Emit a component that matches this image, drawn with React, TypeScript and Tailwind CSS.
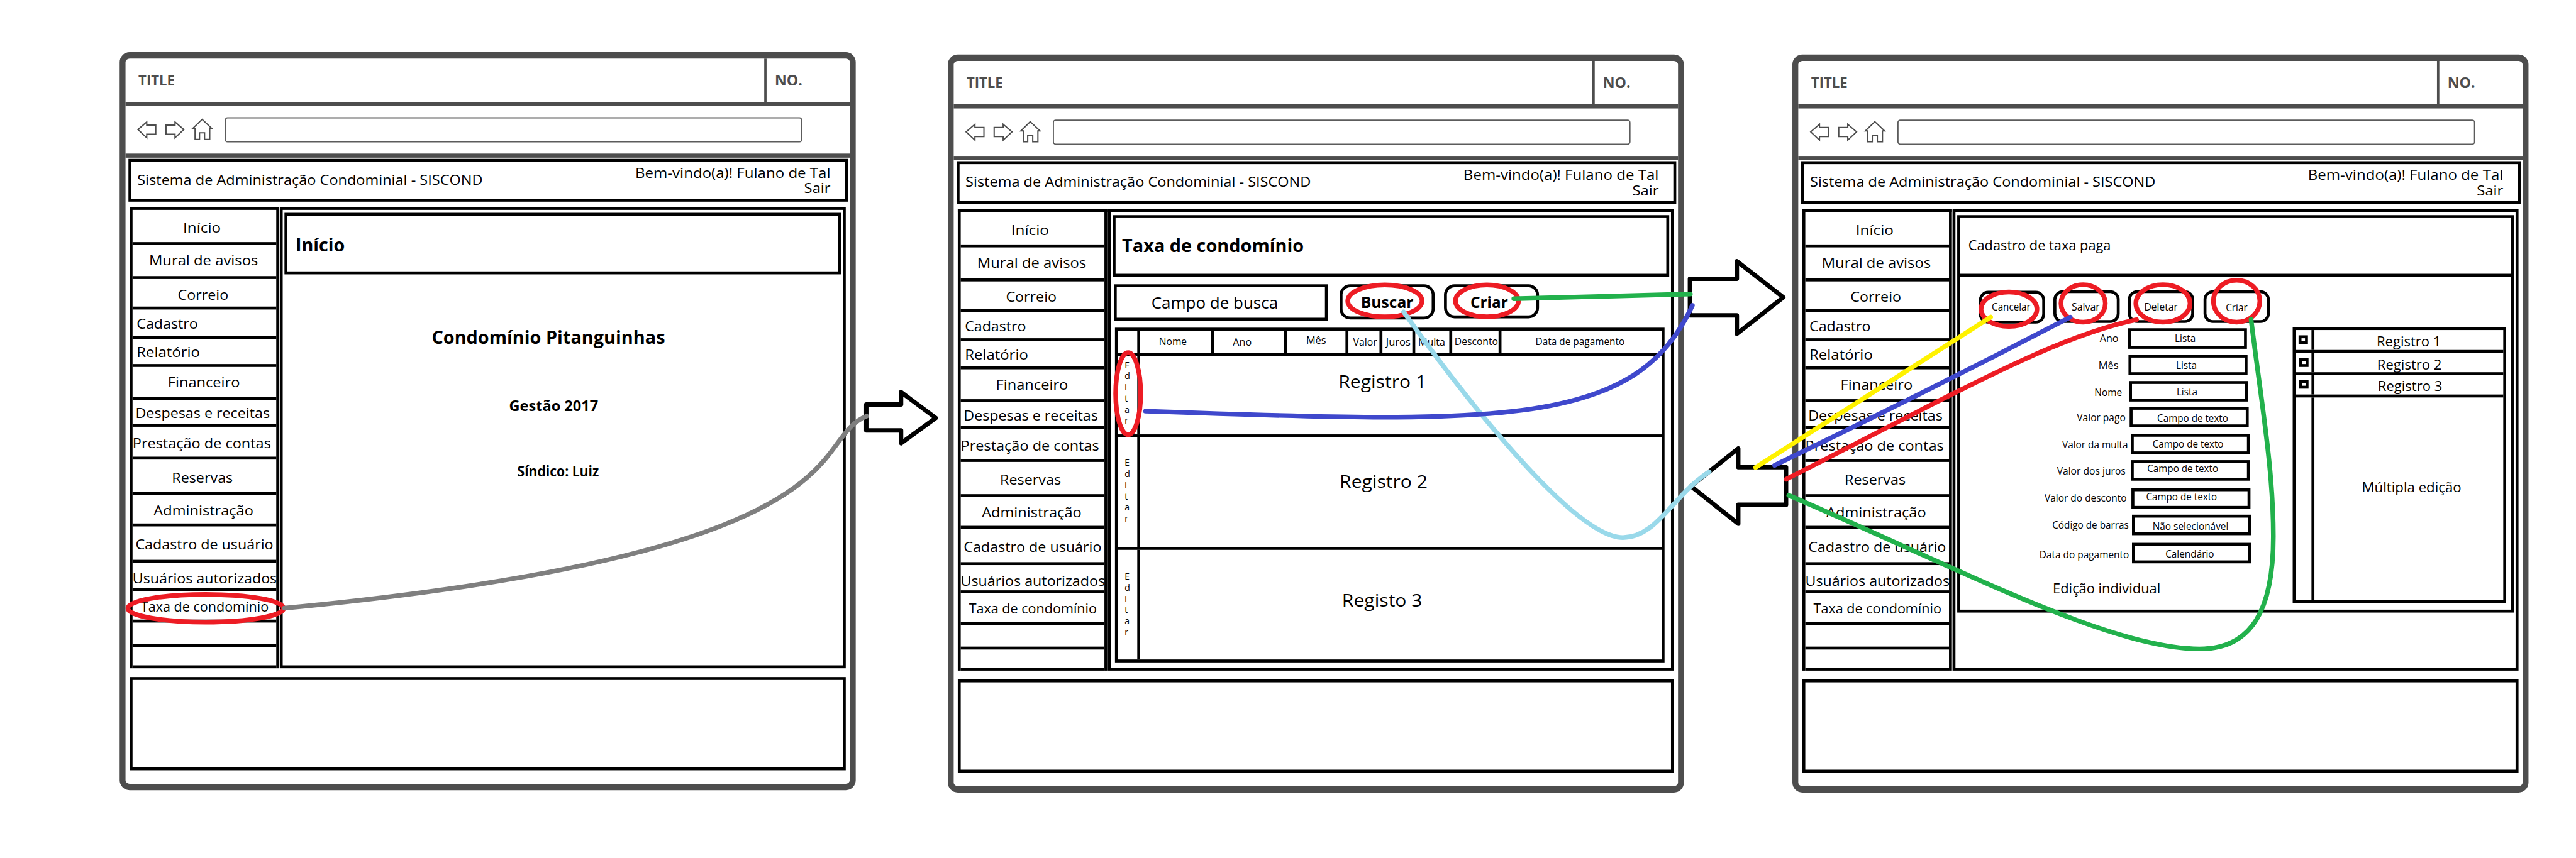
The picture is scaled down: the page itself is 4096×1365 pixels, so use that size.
import { useLayoutEffect, useRef } from "react";
import type { ReactNode } from "react";

/** Single line of text, condensed or widened horizontally to the given width. */
function Fit({ width, className = "", children }: { width: number; className?: string; children: ReactNode }) {
  const outer = useRef<HTMLSpanElement>(null);
  const inner = useRef<HTMLSpanElement>(null);
  useLayoutEffect(() => {
    if (!outer.current || !inner.current) return;
    inner.current.style.transform = "none";
    const ratio = outer.current.getBoundingClientRect().width / inner.current.getBoundingClientRect().width;
    inner.current.style.transform = `scaleX(${ratio})`;
  }, [width, children]);
  return (
    <span ref={outer} className={`block shrink-0 leading-none ${className}`} style={{ width }}>
      <span ref={inner} className="inline-block origin-left whitespace-nowrap">
        {children}
      </span>
    </span>
  );
}

type Item = { text: string; width: number; row: string };

const menu: Item[] = [
  { text: "Início", width: 64.5, row: "h-[60px] pl-[86px] pt-[18px]" },
  { text: "Mural de avisos", width: 186, row: "h-[58px] pl-[28px] pt-[14px]" },
  { text: "Correio", width: 86.5, row: "h-[52px] pl-[76.5px] pt-[14px]" },
  { text: "Cadastro", width: 104.5, row: "h-[50px] pl-[6.5px] pt-[11.5px]" },
  { text: "Relatório", width: 108, row: "h-[48px] pl-[7px] pt-[10px]" },
  { text: "Financeiro", width: 123, row: "h-[56px] pl-[60px] pt-[14px]" },
  { text: "Despesas e receitas", width: 229, row: "h-[46px] pl-[5px] pt-[10px]" },
  { text: "Prestação de contas", width: 236, row: "h-[56px] pl-0 pt-[15.5px]" },
  { text: "Reservas", width: 104, row: "h-[60px] pl-[67px] pt-[18px]" },
  { text: "Administração", width: 170, row: "h-[54px] pl-[35.5px] pt-[14px]" },
  { text: "Cadastro de usuário", width: 235, row: "h-[62px] pl-[4.5px] pt-[17.5px]" },
  { text: "Usuários autorizados", width: 246, row: "h-[48px] pl-0 pt-[13.5px]" },
  { text: "Taxa de condomínio", width: 218, row: "h-[54px] pl-[14px] pt-[14px]" },
  { text: "", width: 0, row: "h-[42px]" },
  { text: "", width: 0, row: "h-[36px]" },
];

function Toolbar() {
  return (
    <div className="flex h-[81px] pl-[18px] pt-[19px]">
      <svg width="136" height="42" viewBox="232 200 136 42" fill="none" stroke="#4d4d4d" strokeWidth="2.2">
        <path d="M235.2 221 L250.2 208 V213.4 H265.6 V229 H250.2 V235 Z" />
        <path d="M313.4 221 L298.4 208 V213.4 H283 V229 H298.4 V235 Z" />
        <path d="M344.6 203.6 L328.5 219.3 H332.6 V237.8 H340.2 V226.6 H348.8 V237.8 H357.6 V219.3 H361.2 Z" />
      </svg>
      <div className="ml-[15px] h-[43px] w-[985px] rounded-[5px] border-2 border-[#5c5c5c]" />
    </div>
  );
}

function Screen({ className, children }: { className: string; children: ReactNode }) {
  return (
    <section
      className={`flex h-[1259px] w-[1255px] shrink-0 flex-col rounded-[17px] border-x-[10px] border-y-[11px] border-[#4d4d4d] ${className}`}
    >
      <div className="flex h-[81px] shrink-0 border-b-[7px] border-[#4d4d4d] text-[25px] font-bold text-[#4d4d4d]">
        <div className="flex-1 pl-[21.5px] pt-[24px]">
          <Fit width={62}>TITLE</Fit>
        </div>
        <div className="w-[146px] border-l-4 border-[#4d4d4d] pl-[14px] pt-[24px]">
          <Fit width={47}>NO.</Fit>
        </div>
      </div>
      <div className="shrink-0 border-b-[7px] border-[#4d4d4d]">
        <Toolbar />
      </div>
      <header className="ml-[5px] mt-[2px] flex h-[73px] w-[1227px] shrink-0 justify-between border-5 border-black text-[24px]">
        <div className="pl-[10px] pt-[17.5px]">
          <Fit width={589}>Sistema de Administração Condominial - SISCOND</Fit>
        </div>
        <div className="flex flex-col items-end gap-[2.3px] pr-[25px] pt-[5.5px]">
          <Fit width={333}>Bem-vindo(a)! Fulano de Tal</Fit>
          <Fit width={45}>Sair</Fit>
        </div>
      </header>
      <div className="ml-[7px] mt-[9px] flex h-[787px] shrink-0 gap-px">
        <nav className="w-[255px] shrink-0 border-x-5 border-t-5 border-black text-[24px]">
          {menu.map((m, i) => (
            <div key={i} className={`border-b-5 border-black ${m.row}`}>
              {m.text && <Fit width={m.width}>{m.text}</Fit>}
            </div>
          ))}
        </nav>
        <main className="w-[965px] shrink-0 border-5 border-black">{children}</main>
      </div>
      <footer className="ml-[7px] mt-[15px] h-[159px] w-[1221px] shrink-0 border-5 border-black" />
    </section>
  );
}

function HomeScreen() {
  return (
    <>
      <div className="ml-[3px] mt-[5px] h-[105px] w-[949px] border-5 border-black pl-[14px] pt-[33.5px] text-[31px] font-bold">
        <Fit width={84}>Início</Fit>
      </div>
      <div className="flex flex-col font-bold">
        <Fit width={398} className="ml-[254px] mt-[93px] text-[30px]">Condomínio Pitanguinhas</Fit>
        <Fit width={152} className="ml-[386px] mt-[88.5px] text-[24px]">Gestão 2017</Fit>
        <Fit width={139} className="ml-[400px] mt-[88px] text-[24px]">Síndico: Luiz</Fit>
      </div>
    </>
  );
}

const columns: Item[] = [
  { text: "Nome", width: 47.5, row: "w-[126px] pl-[32px] pt-[10px] border-r-5" },
  { text: "Ano", width: 32, row: "w-[124px] pl-[32px] pt-[11px] border-r-5" },
  { text: "Mês", width: 34, row: "w-[105px] pl-[33px] pt-[8px] border-r-5" },
  { text: "Valor", width: 41, row: "w-[58px] pl-[8px] pt-[11px] border-r-5" },
  { text: "Juros", width: 42, row: "w-[56px] pl-[6px] pt-[11px] border-r-5" },
  { text: "Multa", width: 46, row: "w-[63px] pl-[4.5px] pt-[11px] border-r-5" },
  { text: "Desconto", width: 74, row: "w-[84px] pl-[3.5px] pt-[10px] border-r-5" },
  { text: "Data de pagamento", width: 152, row: "w-[273px] pl-[58px] pt-[10px]" },
];

const records = [
  { text: "Registro 1", width: 150, row: "h-[139px] border-b-5", edit: "pt-[6.4px]", label: "pl-[337.5px] pt-[29px]" },
  { text: "Registro 2", width: 150, row: "h-[192px] border-b-5", edit: "pt-[34px]", label: "pl-[339.5px] pt-[60px]" },
  { text: "Registo 3", width: 137, row: "h-[187px]", edit: "pt-[36px]", label: "pl-[343.5px] pt-[71px]" },
];

function FeeScreen() {
  return (
    <>
      <div className="ml-[3px] mt-[5px] h-[105px] w-[949px] border-5 border-black pl-[11px] pt-[31.5px] text-[30px] font-bold">
        <Fit width={310}>Taxa de condomínio</Fit>
      </div>
      <div className="ml-[5px] mt-[13px] flex h-[62px] items-start">
        <div className="h-[62px] w-[365px] border-5 border-black pl-[58.5px] pt-[13px] text-[27px]">
          <Fit width={216}>Campo de busca</Fit>
        </div>
        <div className="ml-[20px] h-[60px] w-[162px] rounded-[18px] border-5 border-black pl-[31px] pt-[11px] text-[27px] font-bold">
          <Fit width={90}>Buscar</Fit>
        </div>
        <div className="ml-[15.5px] h-[58px] w-[162px] rounded-[18px] border-5 border-black pl-[40px] pt-[11px] text-[27px] font-bold">
          <Fit width={64}>Criar</Fit>
        </div>
      </div>
      <div className="ml-[7px] mt-[12px] h-[571px] w-[937px] border-5 border-black">
        <div className="flex h-[43px] border-b-5 border-black text-[17.5px]">
          <div className="w-[38px] border-r-5 border-black" />
          {columns.map((c) => (
            <div key={c.text} className={`border-black ${c.row}`}>
              <Fit width={c.width}>{c.text}</Fit>
            </div>
          ))}
        </div>
        {records.map((r) => (
          <div key={r.text} className={`flex border-black ${r.row}`}>
            <div className={`flex w-[38px] flex-col border-r-5 border-black pl-[11.5px] text-[15px] leading-[19px] ${r.edit}`}>
              {"Editar".split("").map((ch, i) => (
                <span key={i}>{ch}</span>
              ))}
            </div>
            <div className={`text-[30px] ${r.label}`}>
              <Fit width={r.width}>{r.text}</Fit>
            </div>
          </div>
        ))}
      </div>
    </>
  );
}

const actions: Item[] = [
  { text: "Cancelar", width: 66, row: "ml-[32px] mt-[24px] pl-[17px] pt-[14px]" },
  { text: "Salvar", width: 48, row: "ml-[13.5px] mt-[23px] pl-[26px] pt-[15px]" },
  { text: "Deletar", width: 57, row: "ml-[14px] mt-[23px] pl-[23.5px] pt-[15px]" },
  { text: "Criar", width: 37, row: "ml-[16px] mt-[23px] pl-[33.5px] pt-[16px]" },
];

const fields = [
  { label: "Ano", lw: 32, row: "", cell: "w-[286px] pr-[16px] pt-[8px]", value: "Lista", vw: 35.5, box: "pl-[75px] pt-[3px]" },
  { label: "Mês", lw: 34, row: "mt-[10px]", cell: "w-[287px] pr-[17.5px] pt-[9px]", value: "Lista", vw: 35.5, box: "pl-[76px] pt-[4px]" },
  { label: "Nome", lw: 47, row: "mt-[10px]", cell: "w-[288px] pr-[12.5px] pt-[10px]", value: "Lista", vw: 35.5, box: "pl-[76px] pt-[4px]" },
  { label: "Valor pago", lw: 83, row: "mt-[9px]", cell: "w-[289px] pr-[7.5px] pt-[9px]", value: "Campo de texto", vw: 121, box: "pl-[42px] pt-[5px]" },
  { label: "Valor da multa", lw: 112, row: "mt-[11px]", cell: "w-[291px] pr-[5px] pt-[9px]", value: "Campo de texto", vw: 121, box: "pl-[31.5px] pt-[3px]" },
  { label: "Valor dos juros", lw: 117, row: "mt-[10px]", cell: "w-[291px] pr-[9px] pt-[10px]", value: "Campo de texto", vw: 121, box: "pl-[23px] pt-0" },
  { label: "Valor do desconto", lw: 140, row: "mt-[13px]", cell: "w-[292px] pr-[8.5px] pt-[8px]", value: "Campo de texto", vw: 121, box: "pl-[20px] pt-[1px]" },
  { label: "Código de barras", lw: 130.5, row: "mt-[10px]", cell: "w-[293px] pr-[6px] pt-[9px]", value: "Não selecionável", vw: 129.5, box: "pl-[30px] pt-[6px]" },
  { label: "Data do pagamento", lw: 153, row: "mt-[13px]", cell: "w-[293px] pr-[5.5px] pt-[11px]", value: "Calendário", vw: 83, box: "pl-[52px] pt-[5px]" },
];

const picks = [
  { text: "Registro 1", row: "h-[39px]", box: "pl-[5px] pt-[9px]", label: "pl-[105.5px] pt-[7px]" },
  { text: "Registro 2", row: "h-[38px]", box: "pl-[6px] pt-[9px]", label: "pl-[106.5px] pt-[7px]" },
  { text: "Registro 3", row: "h-[38px]", box: "pl-[6px] pt-[8px]", label: "pl-[107.5px] pt-[6px]" },
];

function EditScreen() {
  return (
    <div className="ml-[3px] mt-[5px] h-[678px] w-[949px] border-5 border-black">
      <div className="h-[100px] border-b-5 border-black pl-[14px] pt-[33.5px] text-[24px]">
        <Fit width={243}>Cadastro de taxa paga</Fit>
      </div>
      <div className="flex">
        <div className="w-[567px] shrink-0 text-[17.5px]">
          <div className="flex h-[88px] items-start">
            {actions.map((a) => (
              <div key={a.text} className={`h-[55.5px] w-[113px] shrink-0 rounded-[16px] border-5 border-black ${a.row}`}>
                <Fit width={a.width}>{a.text}</Fit>
              </div>
            ))}
          </div>
          {fields.map((f) => (
            <div key={f.label} className={`flex h-[35px] ${f.row}`}>
              <div className={`flex justify-end ${f.cell}`}>
                <Fit width={f.lw}>{f.label}</Fit>
              </div>
              <div className={`w-[203px] border-5 border-black ${f.box}`}>
                <Fit width={f.vw}>{f.value}</Fit>
              </div>
            </div>
          ))}
          <Fit width={183.5} className="ml-[157.5px] mt-[30px] text-[24px]">Edição individual</Fit>
        </div>
        <div className="mt-[86px] flex h-[471px] w-[364px] shrink-0 flex-col border-5 border-black text-[24px]">
          {picks.map((p) => (
            <div key={p.text} className={`flex shrink-0 border-b-5 border-black ${p.row}`}>
              <div className={`w-[32px] border-r-5 border-black ${p.box}`}>
                <div className="h-[15px] w-[16px] border-5 border-black" />
              </div>
              <div className={p.label}>
                <Fit width={110}>{p.text}</Fit>
              </div>
            </div>
          ))}
          <div className="flex flex-1">
            <div className="w-[32px] border-r-5 border-black" />
            <div className="pl-[80.5px] pt-[140.5px]">
              <Fit width={169.5}>Múltipla edição</Fit>
            </div>
          </div>
        </div>
      </div>
    </div>
  );
}

/** Navigation arrows, highlight rings and connector curves drawn over the screens. */
function Annotations() {
  return (
    <svg className="pointer-events-none absolute left-0 top-0" width="4392" height="1464" viewBox="0 0 4392 1464" fill="none" strokeWidth="8" strokeLinecap="round" strokeLinejoin="round">
      <g stroke="#000000" strokeWidth="7.5">
        <path d="M1477 690 H1536.3 V669 L1595.5 713 L1536.3 756 V734.3 H1477 Z" />
        <path d="M2881.3 475.5 H2961.3 V445.5 L3040.5 507.3 L2961.3 569.5 V538 H2881.3 Z" />
        <path d="M2883 829.4 L2963.7 765 V797 H3045.2 V861 H2963.7 V893.5 Z" />
      </g>
      <g stroke="#ed1c24">
        <ellipse cx="350.8" cy="1037.6" rx="132.8" ry="23.6" />
        <ellipse cx="1923.5" cy="671.5" rx="21.3" ry="70" />
        <ellipse cx="2361.2" cy="513.3" rx="63.3" ry="27.2" />
        <ellipse cx="2535.2" cy="513.3" rx="53.7" ry="27.2" />
        <ellipse cx="3425.3" cy="527.4" rx="47.7" ry="29.4" />
        <ellipse cx="3551.7" cy="517.6" rx="37.8" ry="32" />
        <ellipse cx="3687.8" cy="517.6" rx="46.2" ry="32" />
        <ellipse cx="3813.4" cy="513.7" rx="39.6" ry="35.8" />
      </g>
      <path stroke="#7f7f7f" d="M485 1037.4 C1500 940 1375 750 1477.6 710" />
      <path stroke="#22b14c" d="M2581 509.5 L2882 501.6" />
      <path stroke="#99d9ea" d="M2393.2 532 C2480 655 2680 917 2767 917 C2825 917 2852 845 2914 804.8" />
      <path stroke="#3f48cc" d="M1953 701.4 C2560 723 2790 730 2885.5 521" />
      <path stroke="#fff200" d="M3394 541 L2993.3 797.4" />
      <path stroke="#3f48cc" d="M3529.7 541 Q3280 671 3025.5 793.8" />
      <path stroke="#ed1c24" d="M3642.7 545.3 C3500 575 3330 673 3045.4 817.5" />
      <path stroke="#22b14c" d="M3838 545 C3856 690 3876 800 3876 915 C3876 1040 3840 1107 3750 1107 C3596 1107 3330 965 3049.8 845" />
    </svg>
  );
}

export default function App() {
  return (
    <div className="h-[1365px] w-[4096px] overflow-hidden bg-white">
      <div className="relative flex h-[1464px] w-[4392px] origin-top-left scale-[0.9326] items-start pl-[204px] pt-[89px] font-['Open_Sans','Noto_Sans',sans-serif] text-black">
        <Screen className="">
          <HomeScreen />
        </Screen>
        <Screen className="ml-[157px] mt-[4px]">
          <FeeScreen />
        </Screen>
        <Screen className="ml-[185px] mt-[4px]">
          <EditScreen />
        </Screen>
        <Annotations />
      </div>
    </div>
  );
}
